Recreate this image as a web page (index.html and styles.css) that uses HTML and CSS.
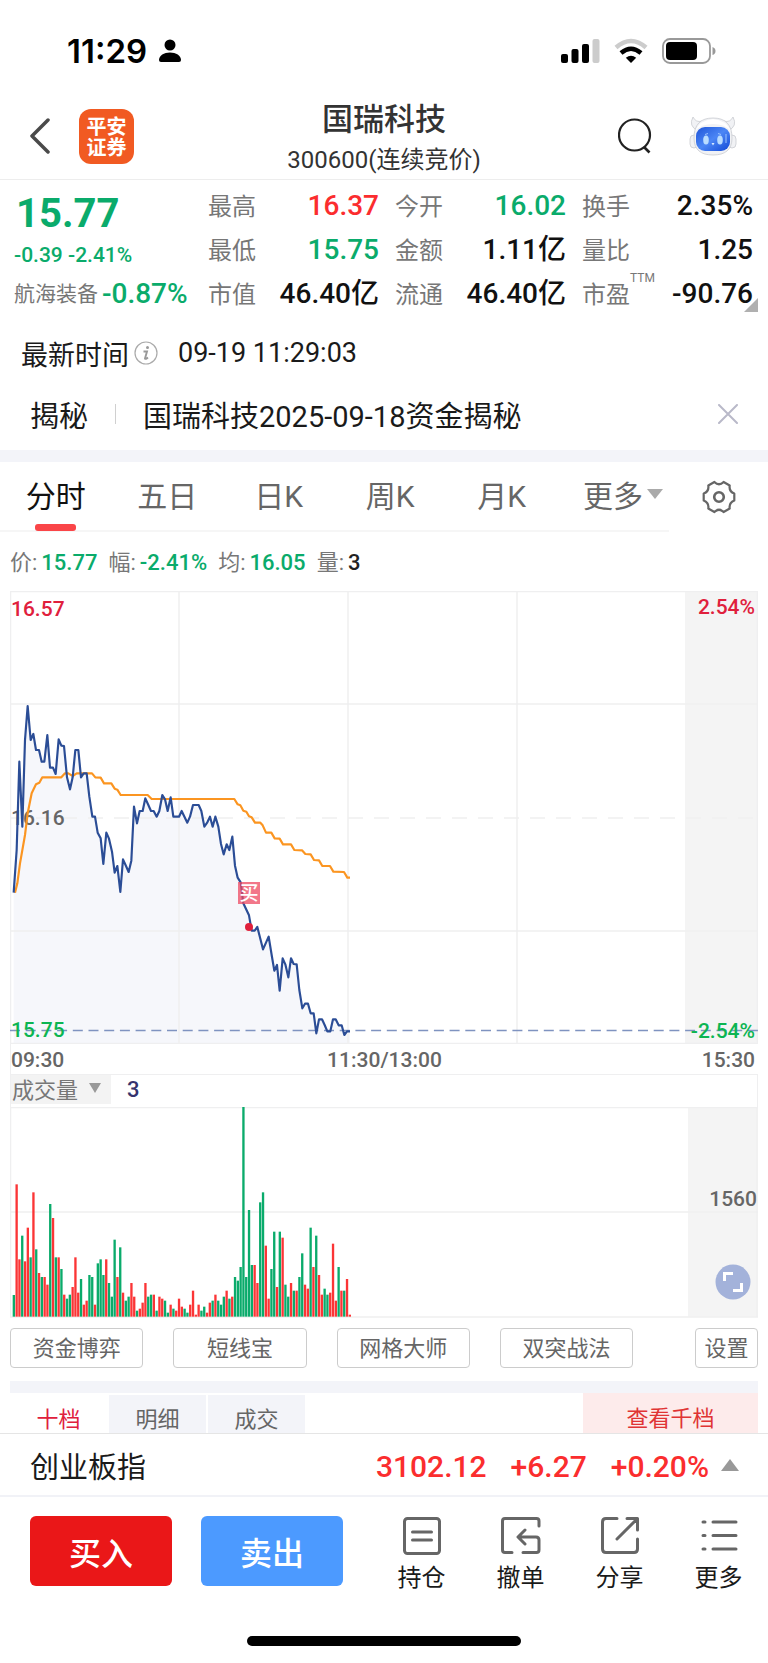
FILE: index.html
```html
<!DOCTYPE html>
<html lang="zh-CN">
<head>
<meta charset="utf-8">
<meta name="viewport" content="width=device-width, initial-scale=1">
<title>国瑞科技 300600</title>
<link rel="stylesheet" href="styles.css">
</head>
<body>
<div class="status">
  <div class="status-left">
    <span class="clock">11:29</span>
    <svg width="22" height="24" viewBox="0 0 22 24"><circle cx="11" cy="6" r="5.500"/><path d="M0 21C0 16.500 5 13.500 11 13.500S22 16.500 22 21Q22 23 20 23H2Q0 23 0 21Z"/></svg>
  </div>
  <div class="status-right">
    <svg width="39" height="26" viewBox="0 0 39 26"><rect x="0" y="16" width="7" height="9" rx="2"/><rect x="10.500" y="11" width="7" height="14" rx="2"/><rect x="21" y="6" width="7" height="19" rx="2"/><rect x="31.500" y="1" width="7" height="24" rx="2" fill="#ccc"/></svg>
    <svg width="34" height="26" viewBox="0 0 34 26"><g fill="none" stroke-width="4.500"><path d="M2 9.500Q17-3.500 32 9.500" stroke="#ccc"/><path d="M7 15Q17 6.500 27 15" stroke="#000"/></g><path d="M17 25L11.800 19.800Q17 15.800 22.200 19.800Z"/></svg>
    <svg width="54" height="26" viewBox="0 0 54 26"><rect x="1" y="1" width="47" height="24" rx="7" fill="none" stroke="#999" stroke-width="1.800"/><rect x="4" y="4" width="31" height="18" rx="4"/><path d="M50.500 9Q53.500 10 53.500 13T50.500 17Z" fill="#999"/></svg>
  </div>
</div>

<header class="header">
  <div class="header-left">
    <button class="icon-btn" aria-label="返回"><svg width="20" height="36" viewBox="0 0 20 36"><path d="M18 2L2 18L18 34" fill="none" stroke="#4a4a4a" stroke-width="3.500" stroke-linecap="round" stroke-linejoin="round"/></svg></button>
    <a class="brand" href="#home"><span>平安</span><span>证券</span></a>
  </div>
  <div class="title">
    <h1>国瑞科技</h1>
    <p>300600(连续竞价)</p>
  </div>
  <div class="header-right">
    <button class="icon-btn" aria-label="搜索"><svg width="34" height="36" viewBox="0 0 34 36"><circle cx="16.500" cy="17" r="15.500" fill="none" stroke="#222" stroke-width="2.200"/><path d="M26 29L31.500 34.500" stroke="#222" stroke-width="2.600"/></svg></button>
    <button class="icon-btn" aria-label="智能助手"><svg width="48" height="40" viewBox="0 0 48 40">
      <defs><linearGradient id="face" x1="0" y1="0" x2="1" y2="1"><stop offset="0" stop-color="#1f55d8"/><stop offset=".5" stop-color="#4b86f5"/><stop offset="1" stop-color="#1148d6"/></linearGradient></defs>
      <g fill="#f1f2f5" stroke="#c9cbd1" stroke-width=".8"><path d="M9 15Q-1 10 4 1Q7 7 13 5Z"/><path d="M39 15Q49 10 44 1Q41 7 35 5Z"/><rect x="1" y="19" width="8" height="13" rx="4"/><rect x="39" y="19" width="8" height="13" rx="4"/><path d="M24 2C36 2 43 8 43 22C43 34 36 39 24 39S5 34 5 22C5 8 12 2 24 2Z"/></g>
      <path d="M6 15Q11 4 24 3Q37 4 42 15Q36 8 24 8T6 15Z" fill="#fff"/>
      <rect x="7" y="11" width="34" height="24" rx="9" fill="url(#face)"/>
      <ellipse cx="17" cy="24" rx="2.800" ry="4.500" fill="#b9dcff"/><ellipse cx="31" cy="24" rx="2.800" ry="4.500" fill="#b9dcff"/>
      <path d="M16 18.500L19 17.500M29 17.500L32 18.500M37 18V27" stroke="#9cc4ff" stroke-width="1"/><path d="M22.500 27H25.500L24 29.500Z" fill="#d7eaff"/>
    </svg></button>
  </div>
</header>

<main>
<section class="quote">
  <div class="quote-main">
    <div class="price down">15.77</div>
    <div class="change down">-0.39 -2.41%</div>
    <div class="sector"><span>航海装备</span><b class="down">-0.87%</b></div>
  </div>
  <dl class="stats">
    <div><dt>最高</dt><dd class="up">16.37</dd></div>
    <div><dt>今开</dt><dd class="down">16.02</dd></div>
    <div><dt>换手</dt><dd>2.35%</dd></div>
    <div><dt>最低</dt><dd class="down">15.75</dd></div>
    <div><dt>金额</dt><dd>1.11亿</dd></div>
    <div><dt>量比</dt><dd>1.25</dd></div>
    <div><dt>市值</dt><dd>46.40亿</dd></div>
    <div><dt>流通</dt><dd>46.40亿</dd></div>
    <div><dt>市盈<sup>TTM</sup></dt><dd>-90.76</dd></div>
  </dl>
  <span class="corner"></span>
</section>

<div class="time-row">
  <span>最新时间</span>
  <svg width="24" height="24" viewBox="0 0 24 24"><circle cx="12" cy="12" r="11" fill="none" stroke="#aaa" stroke-width="1.200"/><circle cx="13.500" cy="6.500" r="1.500" fill="#999"/><path d="M9.500 10.500H13L11 17.500Q11.500 18.500 14 16.500" fill="none" stroke="#999" stroke-width="1.900"/></svg>
  <time>09-19 11:29:03</time>
</div>

<div class="news">
  <span class="news-tag">揭秘</span>
  <a href="#news">国瑞科技2025-09-18资金揭秘</a>
  <button class="icon-btn" aria-label="关闭"><svg width="20" height="20" viewBox="0 0 20 20"><path d="M1 1L19 19M19 1L1 19" stroke="#b9b9c9" stroke-width="2" stroke-linecap="round"/></svg></button>
</div>

<nav class="tabs">
  <div class="tab-list">
    <button class="tab active">分时</button><button class="tab">五日</button><button class="tab">日K</button><button class="tab">周K</button><button class="tab">月K</button><button class="tab more">更多<svg width="16" height="10" viewBox="0 0 16 10"><path d="M0 0H16L8 10Z" fill="#aaa"/></svg></button>
  </div>
  <button class="icon-btn gear" aria-label="图表设置"><svg width="34" height="34" viewBox="-17 -17 34 34"><g fill="none" stroke="#666" stroke-width="2.200" stroke-linejoin="round"><path d="M15.300-3.500V3.500Q9.800 5.600 10.700 11.500L4.600 15Q0 10.500-4.600 15L-10.700 11.500Q-9.800 5.600-15.300 3.500V-3.500Q-9.800-5.600-10.700-11.500L-4.600-15Q0-10.500 4.600-15L10.700-11.500Q9.800-5.600 15.300-3.500Z"/><circle r="4.800" stroke-width="2.600"/></g></svg></button>
</nav>

<div class="legend">
  <span>价:<b class="down">15.77</b></span><span>幅:<b class="down">-2.41%</b></span><span>均:<b class="down">16.05</b></span><span>量:<b>3</b></span>
</div>

<section class="chart">
  <div class="plot">
    <svg viewBox="0 0 748 453">
      <rect x="675" y="0" width="73" height="453" fill="#f4f4f4"/>
      <g transform="translate(-10 99) scale(.33333)">
        <path id="area" fill="#f6f7fb"/>
      </g>
      <g fill="none" stroke="#efeff0" stroke-width="1.500">
        <rect x=".5" y=".5" width="747" height="452"/>
        <path d="M169 0V453M338 0V453M507 0V453M0 113H748M0 340H748"/>
        <path d="M0 227H748" stroke-dasharray="15 11"/>
      </g>
      <path d="M0 439.500H748" stroke="#7f93c0" stroke-width="1.600" stroke-dasharray="10 5.700"/>
    </svg>
    <span class="lbl mid">16.16</span>
    <svg class="lines" viewBox="0 0 748 453">
      <g transform="translate(-10 99) scale(.33333)" fill="none" stroke-width="6.500" stroke-linejoin="round">
        <polyline stroke="#fb9521" points="45,608 52,580 60,520 75,435 83,370 95,310 108,283 118,278 127,262 184,262 195,250 205,250 218,258 230,250 276,250 286,262 302,263 312,280 334,280 344,296 352,299 362,315 443,315 455,327 703,327 713,343 721,346 730,362 739,365 747,379 755,382 765,398 781,398 788,406 798,428 814,428 824,445 839,446 849,463 873,463 883,480 906,481 916,492 932,493 942,510 957,511 967,528 990,528 1000,545 1032,546 1042,563 1050,563"/>
        <polyline id="price" stroke="#2b4d96" points="41,608 50,480 58,215 67,410 75,150 83,48 92,150 100,132 108,180 117,180 125,215 133,215 142,135 150,233 159,233 167,252 176,148 184,167 192,168 201,262 210,298 218,262 226,180 235,180 243,262 251,250 260,250 268,320 277,380 285,380 293,428 302,445 310,522 319,428 327,446 336,485 344,548 352,528 361,606 369,508 378,528 386,546 394,512 402,350 411,400 419,363 428,363 436,325 445,345 453,363 461,363 470,380 478,363 487,315 495,328 503,363 512,322 520,380 537,380 545,363 562,398 570,380 579,345 596,345 604,363 613,410 622,397 630,380 638,410 646,380 655,410 663,462 671,493 680,463 688,480 697,440 705,527 713,563 722,577 730,640 747,676 755,722 764,722 772,711 789,778 806,740 815,795 823,842 831,825 839,902 848,805 856,823 865,862 873,805 881,822 890,823 898,900 907,955 915,941 924,941 932,970 941,970 949,1030 957,988 966,988 974,1005 982,1024 991,1024 999,988 1007,988 1016,1006 1025,1006 1033,1035 1041,1024 1050,1024"/>
        <circle cx="747" cy="711" r="12" fill="#e0203c"/>
      </g>
      <rect x="228" y="291" width="22" height="22" fill="#ed4a62" fill-opacity=".75"/>
      <text class="buy-mark" x="239" y="309" text-anchor="middle">买</text>
    </svg>
    <span class="lbl tl">16.57</span>
    <span class="lbl tr">2.54%</span>
    <span class="lbl bl">15.75</span>
    <span class="lbl br">-2.54%</span>
  </div>
  <div class="axis"><span>09:30</span><span>11:30/13:00</span><span>15:30</span></div>
  <div class="vol-head">
    <button class="vol-select">成交量<svg width="12" height="10" viewBox="0 0 12 10"><path d="M0 0H12L6 10Z" fill="#999"/></svg></button>
    <span class="vol-value">3</span>
  </div>
  <div class="plot">
    <svg viewBox="0 0 748 211">
      <rect x="678" y="0" width="70" height="210" fill="#f4f4f4"/>
      <path d="M0 .500H748M0 105H748M.500 0V210M747 0V210M0 210H748" stroke="#efeff0" stroke-width="1.500" fill="none"/>
      <g id="bars" transform="translate(-10 -57) scale(.33333)"></g>
    </svg>
    <span class="lbl vol-mid">1560</span>
    <button class="expand" aria-label="全屏"><svg width="36" height="36" viewBox="0 0 36 36"><circle cx="18" cy="18" r="17.500" fill="#a3b2da"/><path d="M9.500 17V9.500H18M18 26.500H26.500V19" fill="none" stroke="#fff" stroke-width="3"/></svg></button>
  </div>
</section>

<div class="tools">
  <button>资金博弈</button><button>短线宝</button><button>网格大师</button><button>双突战法</button><button class="set">设置</button>
</div>

<div class="depth">
  <button class="on">十档</button><button>明细</button><button>成交</button><a href="#depth">查看千档</a>
</div>
</main>

<footer>
  <div class="index">
    <span>创业板指</span>
    <div class="index-values up"><b>3102.12</b><b>+6.27</b><b>+0.20%</b></div>
    <svg width="18" height="12" viewBox="0 0 18 12"><path d="M0 12H18L9 0Z" fill="#999"/></svg>
  </div>
  <div class="actions">
    <button class="trade buy">买入</button>
    <button class="trade sell">卖出</button>
    <nav class="links">
      <a href="#hold"><svg width="40" height="40" viewBox="0 0 40 40"><rect x="2.500" y="2.500" width="35" height="35" rx="3"/><path d="M10.500 16H29.500M10.500 24H29.500"/></svg>持仓</a>
      <a href="#cancel"><svg width="40" height="40" viewBox="0 0 40 40"><path d="M38 10V5Q38 2.500 35.500 2.500H4Q1.500 2.500 1.500 5V34Q1.500 36.500 4 36.500H11M22 36.500H35.500Q38 36.500 38 34V24Q38 21 35 21H18M24 14L17 21L24 28"/></svg>撤单</a>
      <a href="#share"><svg width="40" height="40" viewBox="0 0 40 40"><path d="M17 2.500H6Q2.500 2.500 2.500 6V33Q2.500 36.500 6 36.500H34Q37.500 36.500 37.500 33V23M27 2.500H37.500V14M37 3L17 23"/></svg>分享</a>
      <a href="#more"><svg width="40" height="40" viewBox="0 0 40 40"><path d="M4 6H6M14 6H37M4 19.500H6M14 19.500H37M4 33H6M14 33H37"/></svg>更多</a>
    </nav>
  </div>
  <div class="home-bar"></div>
</footer>
<script src="chart.js"></script>
</body>
</html>
```

FILE: styles.css
```css
* { box-sizing: border-box; margin: 0; padding: 0; }
body {
  background: #fff;
  color: #1a1a1a;
  font-family: Roboto, "Noto Sans CJK SC", sans-serif;
  font-weight: 400;
}
button { border: 0; background: none; font: inherit; color: inherit; cursor: pointer; }
a { color: inherit; text-decoration: none; }
b { font-weight: 500; }
svg { display: block; flex: none; }
.up { color: #fb2d2e; }
.down { color: #0aab6b; }

.status { display: flex; justify-content: space-between; align-items: center; height: 102px; padding: 0 52px 0 67px; }
.status-left { display: flex; align-items: center; gap: 12px; }
.clock { font: 600 33px/40px Inter, sans-serif; color: #000; }
.status-right { display: flex; align-items: center; gap: 14px; }

.header { display: grid; grid-template-columns: 1fr auto 1fr; height: 78px; border-bottom: 1px solid #ededed; }
.header-left, .header-right { display: flex; align-items: center; height: 68px; }
.header-left { gap: 29px; padding-left: 30px; }
.header-right { gap: 37px; justify-content: flex-end; padding-right: 31px; }
.icon-btn { display: flex; align-items: center; justify-content: center; }
.brand {
  display: flex; flex-direction: column; justify-content: center;
  width: 55px; height: 55px; border-radius: 12px;
  background: #f15a22; color: #fff; text-align: center;
  font: 700 20px/21px "Noto Sans CJK SC", sans-serif;
}
.title { display: flex; flex-direction: column; align-items: center; gap: 4px; color: #333; }
.title h1 { font-size: 31px; line-height: 36px; font-weight: 500; }
.title p { font-size: 24px; line-height: 36px; }

.quote { position: relative; display: grid; grid-template-columns: 178px 1fr; gap: 16px; padding: 4px 15px 0 14px; }
.price { padding-left: 2px; font-size: 40px; line-height: 60px; font-weight: 700; }
.change { font-size: 21px; line-height: 22px; font-weight: 500; }
.sector { display: flex; align-items: center; gap: 4px; height: 50px; padding-top: 6px; font-size: 21px; line-height: 32px; color: #777; white-space: nowrap; }
.sector b { font-size: 28px; }
.stats { display: grid; grid-template-columns: repeat(3, 1fr); column-gap: 16px; }
.stats div { display: flex; justify-content: space-between; align-items: center; height: 44px; }
.stats dt { position: relative; padding-bottom: 3px; font-size: 24px; color: #777; }
.stats dd { font-size: 28px; line-height: 32px; font-weight: 500; }
.stats dd:not(.up):not(.down) { color: #111; }
.stats sup { position: absolute; left: 100%; top: -4px; font-size: 12px; line-height: 14px; }
.corner { position: absolute; right: 10px; bottom: 4px; border: 7px solid; border-color: transparent #b0b0b0 #b0b0b0 transparent; }

.time-row { display: flex; align-items: center; height: 68px; padding: 6px 21px 0; font-size: 27px; }
.time-row svg { margin: 0 20px 0 5px; }
.news { display: flex; align-items: center; height: 66px; padding: 0 30px 6px; font-size: 29px; }
.news-tag { margin-right: 27px; }
.news a { flex: 1; display: flex; align-items: center; }
.news a::before { content: ""; height: 20px; margin-right: 27px; border-left: 1px solid #d0d0d0; }

.tabs { display: flex; height: 82px; border-top: 12px solid #f3f4f9; font-size: 30px; color: #666; }
.tab-list { flex: 1; display: grid; grid-template-columns: repeat(6, 1fr); border-bottom: 2px solid #f6f6f6; }
.tab { position: relative; padding-bottom: 4px; }
.tab.active { color: #111; }
.tab.active::after { content: ""; position: absolute; left: 50%; bottom: -1px; width: 41px; margin-left: -21px; height: 7px; border-radius: 3px; background: #fa4548; }
.tab.more { display: flex; align-items: center; justify-content: flex-end; gap: 4px; padding-right: 6px; }
.gear { width: 99px; }

.legend { display: flex; align-items: center; gap: 11px; height: 59px; padding: 0 10px 3px; font-size: 22px; color: #777; }
.legend b { margin-left: 4px; }
.legend b:not(.down) { color: #222; }

.chart { margin: 0 10px; color: #666; font-weight: 500; font-size: 22px; }
.plot { position: relative; }
.plot > svg { width: 100%; height: auto; }
.plot .lines { position: absolute; inset: 0; }
.buy-mark { font: 500 19px "Noto Sans CJK SC", sans-serif; fill: #fff; }
.lbl { position: absolute; font-size: 21px; line-height: 26px; }
.tl { left: 1px; top: 5px; color: #e0203c; }
.tr { right: 3px; top: 3px; color: #e0203c; }
.mid { left: 1px; top: 50%; transform: translateY(-50%); }
.bl { left: 1px; bottom: 1px; color: #0cb552; }
.br { right: 3px; bottom: 0; color: #0cb552; }
.axis { display: grid; grid-template-columns: 1fr auto 1fr; height: 31px; font-size: 21px; line-height: 33px; border: solid #efeff0; border-width: 0 0 1px 1px; }
.axis span:last-child { text-align: right; padding-right: 3px; }
.vol-head { display: flex; height: 32px; border: solid #efeff0; border-width: 0 1px 0 1px; }
.vol-select { display: flex; align-items: center; gap: 11px; height: 29px; padding: 0 10px 4px 1px; background: #f3f3f3; font-weight: 400; color: #777; }
.vol-value { margin-left: 16px; line-height: 29px; color: #35336e; }
.vol-mid { right: 1px; top: 79px; }
.expand { position: absolute; right: 7px; bottom: 18px; }

.tools { display: flex; gap: 30px; margin: 10px 10px 13px; }
.tools button { flex: 134 1 0; height: 40px; border: 1px solid #ccc; border-radius: 4px; font-size: 22px; line-height: 32px; padding-top: 2px; color: #666; white-space: nowrap; }
.tools .set { flex: 62 1 0; margin-left: 32px; }

.depth { display: flex; gap: 2px; height: 52px; margin: 0 10px; border-top: 12px solid #f3f4f9; font-size: 22px; line-height: 52px; color: #666; overflow: hidden; }
.depth button { width: 97px; height: 38px; margin-top: 2px; padding-top: 2px; background: #f3f4f9; line-height: 46px; }
.depth .on { background: #fff; color: #e0203c; }
.depth a { width: 175px; margin-left: auto; background: #fdebeb; color: #e03434; text-align: center; }

footer { background: #fff; border-top: 1px solid #e5e5e5; }
.index { display: flex; align-items: center; height: 63px; padding: 0 29px 0 30px; border-bottom: 2px solid #f1f2f7; font-size: 29px; }
.index-values { display: flex; gap: 24px; margin: 0 12px 0 auto; padding-top: 3px; font-size: 30px; }
.actions { display: flex; align-items: flex-start; gap: 29px; padding: 19px 0 0 30px; }
.trade { flex: 0 0 142px; height: 70px; border-radius: 6px; color: #fff; font-size: 32px; font-weight: 500; }
.buy { background: #ea1718; }
.sell { background: #4c9aff; }
.links { flex: 1; display: grid; grid-template-columns: repeat(4, 1fr); }
.links a { display: flex; flex-direction: column; align-items: center; gap: 5px; font-size: 24px; line-height: 34px; }
.links svg { fill: none; stroke: #666; stroke-width: 3; stroke-linecap: round; stroke-linejoin: round; }
.home-bar { width: 274px; height: 10px; margin: 41px auto 17px; border-radius: 5px; background: #000; }
```

FILE: chart.js
```js
// One token per minute: direction (g = down, r = up) and bar height.
const volume = `g65 r397 r172 g243 r166 r267 g178 r373 g202 r131 g119 r119 r96 g338 r296 g178 r178 g143
r66 g54 g66 r89 r178 r72 g113 r36 r48 g125 g119 r36 g160 g172 g125 r172 g101 g60 g231 r119 g208 r72 g48
g60 r101 r60 g18 r24 r42 r101 g60 g66 r66 g18 r60 r54 g48 g12 r36 g24 r18 r54 r30 g24 g12 r36 r78 r6 r36
g18 g30 r12 r42 g48 r66 g48 g36 g60 r78 g54 r60 g119 g108 g149 g633 g119 g320 g155 r155 r101 g343 g373
r213 r54 g143 g255 r89 g255 r237 g96 g60 r101 g78 r78 g119 g190 r96 r84 g267 r149 g243 r125 r66 g84 g66
r72 r219 r48 g149 r78 g78 r113 r6`.split(/\s+/);

const NS = "http://www.w3.org/2000/svg";
const bars = document.getElementById("bars");
volume.forEach((token, i) => {
  const height = Number(token.slice(1));
  const bar = document.createElementNS(NS, "rect");
  bar.setAttribute("x", (38 + i * 8.4).toFixed(1));
  bar.setAttribute("y", 800 - height);
  bar.setAttribute("width", 7);
  bar.setAttribute("height", height);
  bar.setAttribute("fill", token[0] === "g" ? "#0aab6b" : "#fb3536");
  bars.append(bar);
});

// Shade the region under the price line.
const points = document.getElementById("price").getAttribute("points");
document.getElementById("area").setAttribute("d", `M41,1062 L${points} L1050,1062 Z`);
```
